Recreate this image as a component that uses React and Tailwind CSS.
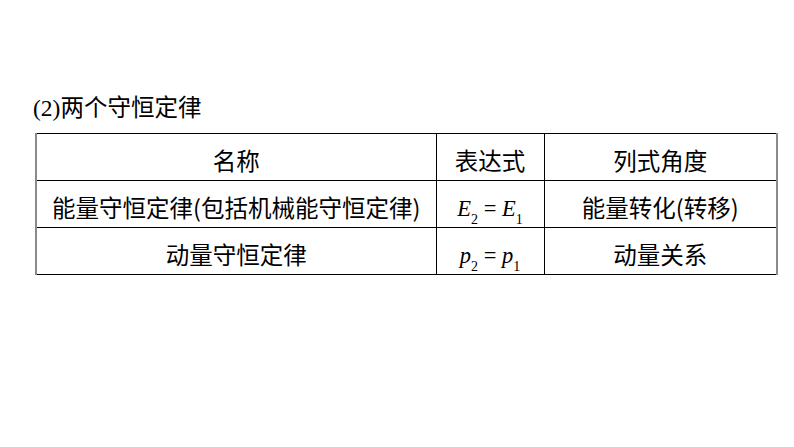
import React from "react";

const cjk = { fontFamily: '"Noto Sans CJK SC", "Noto Sans", sans-serif' };
const serif = { fontFamily: '"Liberation Serif", "Times New Roman", serif' };

function Cell({ children, className = "" }) {
  return (
    <td className={"border border-black text-center align-middle p-0 pt-[7px] text-[23.5px] leading-[1] text-black " + className}>
      {children}
    </td>
  );
}

export default function App() {
  return (
    <div className="w-[794px] h-[447px] bg-white relative overflow-hidden" style={cjk}>
      <div className="pt-[93px] pl-[33px] text-[23.5px] leading-[26px] text-black whitespace-nowrap">
        <span style={serif}>(2)</span>两个守恒定律
      </div>
      <table className="ml-[35px] mt-[12px] border-collapse table-fixed w-[741px]">
        <colgroup>
          <col className="w-[400px]" />
          <col className="w-[108px]" />
          <col className="w-[233px]" />
        </colgroup>
        <tbody>
          <tr className="h-[47px]">
            <Cell className="border-l-2 border-l-[#8a8a8a]">名称</Cell>
            <Cell>表达式</Cell>
            <Cell className="border-r-2 border-r-[#8a8a8a]">列式角度</Cell>
          </tr>
          <tr className="h-[47px]">
            <Cell className="border-l-2 border-l-[#8a8a8a]">能量守恒定律(包括机械能守恒定律)</Cell>
            <Cell>
              <span style={serif} className="italic text-[22.5px]">
                E<sub className="not-italic text-[14px] align-[-5px]">2</sub>
                <span className="not-italic"> = </span>
                E<sub className="not-italic text-[14px] align-[-5px]">1</sub>
              </span>
            </Cell>
            <Cell className="border-r-2 border-r-[#8a8a8a]">能量转化(转移)</Cell>
          </tr>
          <tr className="h-[47px]">
            <Cell className="border-l-2 border-l-[#8a8a8a]">动量守恒定律</Cell>
            <Cell>
              <span style={serif} className="italic text-[22.5px]">
                p<sub className="not-italic text-[14px] align-[-5px]">2</sub>
                <span className="not-italic"> = </span>
                p<sub className="not-italic text-[14px] align-[-5px]">1</sub>
              </span>
            </Cell>
            <Cell className="border-r-2 border-r-[#8a8a8a]">动量关系</Cell>
          </tr>
        </tbody>
      </table>
    </div>
  );
}
